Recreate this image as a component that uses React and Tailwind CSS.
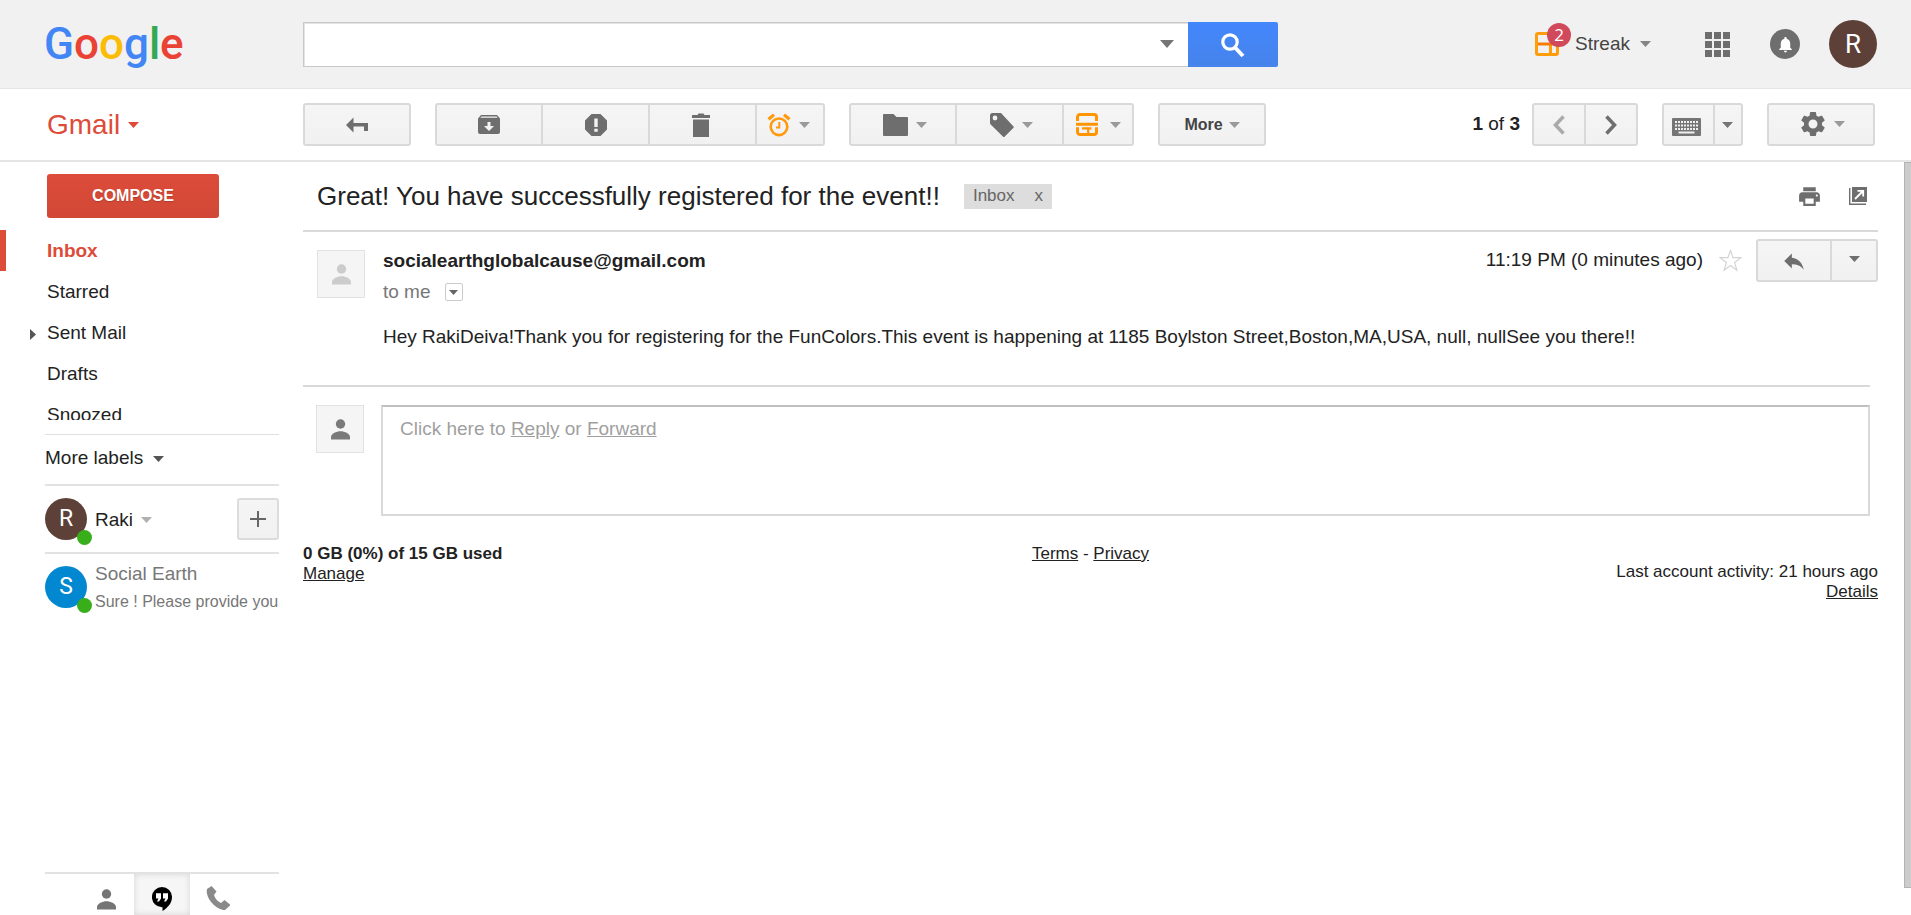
import React from 'react';
import { MdSettings, MdPrint, MdReply, MdNotifications } from 'react-icons/md';

const btn =
  'flex h-[43px] shrink-0 items-center justify-center border-2 border-[#d9d9d9] bg-linear-to-b from-[#f5f5f5] to-[#f1f1f1] text-[#6e6e6e]';

function Caret({ className = 'text-[#9a9a9a]' }) {
  return (
    <svg className={`shrink-0 ${className}`} width="11" height="6" viewBox="0 0 11 6" fill="currentColor" aria-hidden="true">
      <path d="M0 0h11L5.5 6z" />
    </svg>
  );
}

function SearchIcon() {
  return (
    <svg width="24" height="25" viewBox="0 0 24 25" fill="none" stroke="#fff" aria-hidden="true">
      <circle cx="9" cy="9" r="7.200" strokeWidth="3.200" />
      <path d="m14 14.500 8 8.500" strokeWidth="4" />
    </svg>
  );
}

function BackIcon() {
  return (
    <svg width="22" height="16" viewBox="0 0 22 16" fill="currentColor" aria-hidden="true">
      <path d="M0 8 7.500 0.500V6H22v8h-4V9.500H7.500v6z" />
    </svg>
  );
}

function ArchiveIcon() {
  return (
    <svg width="22" height="19" viewBox="0 0 22 19" fill="currentColor" aria-hidden="true">
      <path fillRule="evenodd" d="M3 0h16l3 3.500V17a2 2 0 0 1-2 2H2a2 2 0 0 1-2-2V3.500zM3.200 1.500 2.500 2.700h17l-.8-1.200zM9.500 7v4H6l5 5 5-5h-3.500V7z" />
    </svg>
  );
}

function ReportIcon() {
  return (
    <svg width="22" height="22" viewBox="0 0 22 22" fill="currentColor" aria-hidden="true">
      <path fillRule="evenodd" d="M6.500 0h9L22 6.500v9L15.500 22h-9L0 15.500v-9zM9.300 4.500v8.500h3.400V4.500zM9.300 14.700v3h3.400v-3z" />
    </svg>
  );
}

function TrashIcon() {
  return (
    <svg width="18" height="24" viewBox="0 0 18 24" fill="currentColor" aria-hidden="true">
      <path d="M0 2h5.500l1-1.500h5l1 1.500H18v3H0zM1 6.500h16V24H1z" />
    </svg>
  );
}

function AlarmIcon() {
  return (
    <svg width="24" height="24" viewBox="0 0 24 24" fill="none" stroke="#ff9a0f" aria-hidden="true">
      <circle cx="12" cy="13.800" r="8.300" strokeWidth="2.600" />
      <path d="M1.500 6.300 7 1.800M22.500 6.300 17 1.800" strokeWidth="3.200" />
      <path d="M12.300 9v5.500H9" strokeWidth="2" />
    </svg>
  );
}

function FolderIcon() {
  return (
    <svg width="25" height="22" viewBox="0 0 25 22" fill="currentColor" aria-hidden="true">
      <path d="M1 0h9.500l3 3H24a1 1 0 0 1 1 1v17a1 1 0 0 1-1 1H1a1 1 0 0 1-1-1V1a1 1 0 0 1 1-1z" />
    </svg>
  );
}

function TagIcon() {
  return (
    <svg width="24" height="24" viewBox="0 0 24 24" fill="currentColor" aria-hidden="true">
      <path fillRule="evenodd" d="M2.500 0H11l12.500 13.500a1 1 0 0 1 0 1.300L14.500 23.700a1 1 0 0 1-1.400 0L.7 11.500A2 2 0 0 1 0 10V2.500A2.500 2.500 0 0 1 2.500 0zM5 2.600a2.400 2.400 0 1 0 0 4.800 2.400 2.400 0 0 0 0-4.800z" />
    </svg>
  );
}

function BoxIcon() {
  return (
    <svg width="22" height="23" viewBox="0 0 22 23" fill="none" stroke="#ff9500" aria-hidden="true">
      <path d="M1.500 8V4a2.500 2.500 0 0 1 2.500-2.500h14A2.500 2.500 0 0 1 20.500 4v4M0 11.200h22M1.500 14.300V19A2.500 2.500 0 0 0 4 21.500h14a2.500 2.500 0 0 0 2.500-2.500v-4.700" strokeWidth="3" />
      <path d="M6 15.300h9.500M12.200 15v6" strokeWidth="2.200" />
    </svg>
  );
}

function KeyboardIcon() {
  return (
    <svg width="29" height="18" viewBox="0 0 29 18" aria-hidden="true">
      <rect width="29" height="18" rx="1" fill="#757575" />
      <path d="M3 4h23M3 7.500h23M3 11h23" stroke="#efefef" strokeWidth="2" strokeDasharray="2 1" />
      <path d="M6.500 14.500h16" stroke="#efefef" strokeWidth="2" />
    </svg>
  );
}

function StreakIcon() {
  return (
    <svg width="24" height="24" viewBox="0 0 24 24" fill="none" aria-hidden="true">
      <rect x="1.500" y="1.500" width="21" height="21" rx="1.500" stroke="#ff9d0a" strokeWidth="3" />
      <path d="M15.500 12v11" stroke="#ff9d0a" strokeWidth="3" />
      <path d="M3 12h18" stroke="#f57c00" strokeWidth="3" />
    </svg>
  );
}

function AppsIcon() {
  const at = [0, 9, 18];
  return (
    <svg width="25" height="25" viewBox="0 0 25 25" fill="#6e6e6e" aria-hidden="true">
      {at.map((y) => at.map((x) => <rect key={`${x}-${y}`} x={x} y={y} width="7" height="7" />))}
    </svg>
  );
}

function PopOutIcon() {
  return (
    <svg width="18" height="18" viewBox="0 0 18 18" aria-hidden="true">
      <rect x="3" width="15" height="15" fill="#6e6e6e" />
      <path d="M.7 1v16.300H17" fill="none" stroke="#6e6e6e" strokeWidth="1.400" />
      <path d="M6 12 14 4M8.500 3.800h5.700v5.700" fill="none" stroke="#fff" strokeWidth="1.800" />
    </svg>
  );
}

function PersonIcon() {
  return (
    <svg width="19" height="21" viewBox="0 0 19 21" fill="currentColor" aria-hidden="true">
      <circle cx="9.500" cy="5" r="4.700" />
      <path d="M0 20.500v-2.300C0 14.500 5.500 12.300 9.500 12.300s9.500 2.200 9.500 5.900v2.300z" />
    </svg>
  );
}

function HangoutsIcon() {
  return (
    <svg width="20" height="24" viewBox="0 0 20 24" aria-hidden="true">
      <path d="M10 0a10 10 0 0 1 10 10.200c0 5.600-4 10.300-9.500 13.800v-3.800H10A10.100 10.100 0 0 1 10 0z" fill="#000" />
      <path d="M4 6.200h5v5.300L7 14.500H5l1.500-3H4zM11 6.200h5v5.300l-2 3h-2l1.500-3H11z" fill="#fff" />
    </svg>
  );
}

function PhoneIcon() {
  return (
    <svg width="24" height="24" viewBox="0 0 24 24" fill="#8a8a8a" aria-hidden="true">
      <path d="M5.500 0 1 3C-1 12 10 24 19 24l5-4.500v-1L18.500 14 15 17c-3.500-1.500-6-4.500-7-8l2.500-3.500z" />
    </svg>
  );
}

function Portrait({ className }) {
  return (
    <div className={`flex size-12 shrink-0 items-center justify-center border border-[#e2e2e2] bg-[#f5f5f5] ${className}`}>
      <PersonIcon />
    </div>
  );
}

function Contact({ letter, color }) {
  return (
    <div className={`relative flex size-[42px] shrink-0 items-center justify-center rounded-full text-[23px] text-white ${color}`}>
      <span className="font-['Roboto',sans-serif]">{letter}</span>
      <span className="absolute top-8 left-8 size-[15px] rounded-full bg-[#38ae1b]" />
    </div>
  );
}

function Header() {
  return (
    <header className="flex h-[89px] items-center border-b border-[#e5e5e5] bg-[#f1f1f1]">
      <div className="w-[303px] shrink-0 pl-[44px]">
        <a href="#home" aria-label="Google" className="font-['Roboto',sans-serif] text-[44px] leading-[56px] font-medium">
          <span className="text-[#4285f4]">G</span>
          <span className="text-[#ea4335]">o</span>
          <span className="text-[#fbbc05]">o</span>
          <span className="text-[#4285f4]">g</span>
          <span className="text-[#34a853]">l</span>
          <span className="text-[#ea4335]">e</span>
        </a>
      </div>
      <form className="flex h-[45px] w-[975px]" role="search">
        <div className="flex min-w-0 flex-1 items-center border border-r-0 border-[#c8c8c8] bg-white shadow-[inset_1px_1px_0_#e4e4e4]">
          <input aria-label="Search mail" className="h-full min-w-0 flex-1 bg-transparent px-3 text-[19px] outline-none" />
          <button type="button" aria-label="Search options" className="flex h-full w-[42px] items-center justify-center">
            <svg width="14" height="8" viewBox="0 0 14 8" fill="#757575" aria-hidden="true">
              <path d="M0 0h14L7 8z" />
            </svg>
          </button>
        </div>
        <button type="button" aria-label="Search" className="flex w-[90px] items-center justify-center rounded-r-[2px] bg-linear-to-b from-[#4387fd] to-[#4683ea] pt-0.5">
          <SearchIcon />
        </button>
      </form>
      <div className="ml-auto flex items-center pr-[34px]">
        <button type="button" className="flex items-center">
          <span className="relative mr-4">
            <StreakIcon />
            <span className="absolute -top-[9px] left-3 flex size-6 items-center justify-center rounded-full bg-[#d14a5c] font-['Open_Sans',sans-serif] text-[17px] text-white">
              2
            </span>
          </span>
          <span className="mr-2.5 text-[19px] text-[#444]">Streak</span>
          <Caret className="text-[#858585]" />
        </button>
        <button type="button" aria-label="Apps" className="ml-[54px]">
          <AppsIcon />
        </button>
        <button type="button" aria-label="Notifications" className="ml-10 flex size-[30px] items-center justify-center rounded-full bg-[#6e6e6e] text-white">
          <MdNotifications size={19} />
        </button>
        <button type="button" aria-label="Account" className="ml-[29px] flex size-12 items-center justify-center rounded-full bg-[#5d4037] font-['Roboto',sans-serif] text-[26px] text-white">
          R
        </button>
      </div>
    </header>
  );
}

function Toolbar() {
  return (
    <div className="flex h-[73px] items-center border-b-2 border-[#e5e5e5]">
      <div className="w-[303px] shrink-0 pl-[47px]">
        <button type="button" className="flex items-center gap-2 text-[28px] leading-8 text-[#dd4b39]">
          Gmail
          <Caret className="text-[#dd4b39]" />
        </button>
      </div>
      <div className="flex gap-6">
        <button type="button" aria-label="Back to Inbox" className={`${btn} w-[108px] rounded-[3px]`}>
          <BackIcon />
        </button>
        <div className="flex">
          <button type="button" aria-label="Archive" className={`${btn} w-[108px] rounded-l-[3px]`}>
            <ArchiveIcon />
          </button>
          <button type="button" aria-label="Report spam" className={`${btn} -ml-0.5 w-[109px]`}>
            <ReportIcon />
          </button>
          <button type="button" aria-label="Delete" className={`${btn} -ml-0.5 w-[109px] pr-1`}>
            <TrashIcon />
          </button>
          <button type="button" aria-label="Snooze" className={`${btn} -ml-0.5 w-[70px] gap-2 rounded-r-[3px] pr-1`}>
            <AlarmIcon />
            <Caret />
          </button>
        </div>
        <div className="flex">
          <button type="button" aria-label="Move to" className={`${btn} w-[108px] gap-2 rounded-l-[3px] pl-1`}>
            <FolderIcon />
            <Caret />
          </button>
          <button type="button" aria-label="Labels" className={`${btn} -ml-0.5 w-[109px] gap-2 pl-1`}>
            <TagIcon />
            <Caret />
          </button>
          <button type="button" aria-label="Add to box" className={`${btn} -ml-0.5 w-[72px] gap-3 rounded-r-[3px]`}>
            <BoxIcon />
            <Caret />
          </button>
        </div>
        <button type="button" className={`${btn} w-[108px] gap-1.5 rounded-[3px] text-[16px] font-bold`}>
          <span className="text-[#444]">More</span>
          <Caret />
        </button>
      </div>
      <div className="ml-auto flex items-center gap-6 pr-9">
        <div className="flex items-center">
          <span className="mr-3 text-[19px] text-[#222]">
            <b>1</b> of <b>3</b>
          </span>
          <button type="button" aria-label="Newer" className={`${btn} w-[54px] rounded-l-[3px]`}>
            <svg width="12" height="20" viewBox="0 0 12 20" fill="none" stroke="#aaa" strokeWidth="3.500" aria-hidden="true">
              <path d="M10.500 1.500 2.500 10l8 8.500" />
            </svg>
          </button>
          <button type="button" aria-label="Older" className={`${btn} -ml-0.5 w-[54px] rounded-r-[3px]`}>
            <svg width="12" height="20" viewBox="0 0 12 20" fill="none" stroke="#6e6e6e" strokeWidth="3.500" aria-hidden="true">
              <path d="m1.500 1.500 8 8.500-8 8.500" />
            </svg>
          </button>
        </div>
        <div className="flex">
          <button type="button" aria-label="Input tools" className={`${btn} w-[53px] rounded-l-[3px] pt-1 pr-1`}>
            <KeyboardIcon />
          </button>
          <button type="button" aria-label="Select input tool" className={`${btn} -ml-0.5 w-[30px] rounded-r-[3px] pr-0.5`}>
            <Caret className="text-[#757575]" />
          </button>
        </div>
        <button type="button" aria-label="Settings" className={`${btn} w-[108px] gap-1.5 rounded-[3px] pb-0.5`}>
          <MdSettings size={30} />
          <Caret />
        </button>
      </div>
    </div>
  );
}

function Sidebar() {
  const labels = ['Starred', 'Sent Mail', 'Drafts', 'Snoozed'];
  return (
    <aside className="flex w-[279px] shrink-0 flex-col pt-3">
      <button type="button" className="ml-[47px] h-11 w-[172px] rounded-[3px] bg-linear-to-b from-[#dd4b39] to-[#d14836] text-[16px] font-bold text-white [text-shadow:0_1px_1px_rgba(0,0,0,0.2)]">
        COMPOSE
      </button>
      <nav className="mt-3 h-[190px] overflow-hidden text-[19px] text-[#222]">
        <a href="#inbox" className="flex h-[41px] items-center border-l-[6px] border-[#dd4b39] pt-0.5 pl-[41px] font-bold text-[#dd4b39]">
          Inbox
        </a>
        {labels.map((label) => (
          <a key={label} href={`#${label}`} className="flex h-[41px] items-center pt-0.5">
            <span className="flex w-[47px] justify-end pt-0.5 pr-[11px]">
              {label === 'Sent Mail' && (
                <svg width="6" height="11" viewBox="0 0 6 11" fill="#555" aria-hidden="true">
                  <path d="M0 0v11l6-5.500z" />
                </svg>
              )}
            </span>
            {label}
          </a>
        ))}
      </nav>
      <div className="mt-3.5 ml-[45px] flex min-h-0 flex-1 flex-col border-t border-[#e0e0e0]">
        <button type="button" className="flex h-[49px] items-center gap-2.5 pb-0.5 text-[19px] text-[#222]">
          More labels
          <Caret className="text-[#555]" />
        </button>
        <div className="flex h-[70px] items-start border-y-2 border-[#e2e2e2] pt-3">
          <Contact letter="R" color="bg-[#5d4037]" />
          <button type="button" className="ml-2 flex h-[42px] items-center gap-2 pt-0.5 text-[19px] text-[#222]">
            Raki
            <Caret className="text-[#b0b0b0]" />
          </button>
          <button type="button" aria-label="New conversation" className="ml-auto flex size-[42px] items-center justify-center rounded-[3px] border-2 border-[#dcdcdc] bg-linear-to-b from-[#f5f5f5] to-[#f1f1f1]">
            <svg width="16" height="16" viewBox="0 0 16 16" stroke="#666" strokeWidth="2" aria-hidden="true">
              <path d="M8 0v16M0 8h16" />
            </svg>
          </button>
        </div>
        <a href="#chat" className="flex items-start pt-3">
          <Contact letter="S" color="bg-[#0288d1]" />
          <div className="-mt-1.5 ml-2 min-w-0 flex-1 overflow-hidden whitespace-nowrap text-[#777]">
            <div className="text-[19px] leading-7">Social Earth</div>
            <div className="text-[16px] leading-7">Sure ! Please provide you</div>
          </div>
        </a>
        <div className="mt-auto flex h-[43px] border-t-2 border-[#e2e2e2] pl-[34px]">
          <button type="button" aria-label="Contacts" className="flex w-[55px] items-start justify-center pt-[15px] text-[#757575]">
            <PersonIcon />
          </button>
          <button type="button" aria-label="Hangouts" className="flex w-14 items-start justify-center bg-[#f6f6f6] pt-[13px] shadow-[inset_0_0_6px_#d4d4d4]">
            <HangoutsIcon />
          </button>
          <button type="button" aria-label="Phone" className="flex w-[55px] items-start justify-center pt-3">
            <PhoneIcon />
          </button>
        </div>
      </div>
    </aside>
  );
}

function Message() {
  return (
    <main className="ml-6 min-w-0 flex-1 pr-[26px] text-[19px] text-[#222]">
      <div className="flex h-[70px] items-center border-b-2 border-[#d9d9d9] pr-[11px] pl-3.5">
        <h1 className="text-[26px] leading-8">Great! You have successfully registered for the event!!</h1>
        <span className="ml-6 flex h-[25px] items-center gap-5 bg-[#ddd] px-[9px] text-[17px] text-[#666]">
          Inbox
          <button type="button" aria-label="Remove label">x</button>
        </span>
        <button type="button" aria-label="Print" className="ml-auto text-[#6e6e6e]">
          <MdPrint size={25} />
        </button>
        <button type="button" aria-label="Open in new window" className="ml-[27px]">
          <PopOutIcon />
        </button>
      </div>

      <article className="flex pl-3.5">
        <Portrait className="mt-[18px] text-[#ccc]" />
        <div className="ml-[18px] min-w-0 flex-1">
          <div className="flex items-start">
            <div className="pt-[17px]">
              <div className="leading-6 font-bold">socialearthglobalcause@gmail.com</div>
              <div className="mt-[7px] flex items-center gap-3.5 leading-6 text-[#777]">
                to me
                <button type="button" aria-label="Show details" className="flex size-[18px] items-center justify-center rounded-[2px] border border-[#ccc]">
                  <svg width="9" height="5" viewBox="0 0 9 5" fill="#666" aria-hidden="true">
                    <path d="M0 0h9L4.500 5z" />
                  </svg>
                </button>
              </div>
            </div>
            <div className="ml-auto flex items-center pt-[7px]">
              <time>11:19 PM (0 minutes ago)</time>
              <button type="button" aria-label="Star" className="mr-3.5 ml-4">
                <svg width="23" height="23" viewBox="0 0 23 23" fill="#fff" stroke="#d4d4d4" strokeWidth="1.200" aria-hidden="true">
                  <path d="m11.500 1.500 2.600 7.200h7.700l-6.200 4.700 2.300 7.800-6.400-4.600-6.400 4.600 2.300-7.800L1.200 8.700h7.700z" />
                </svg>
              </button>
              <button type="button" aria-label="Reply" className={`${btn} w-[76px] rounded-l-[3px]`}>
                <MdReply size={26} />
              </button>
              <button type="button" aria-label="More actions" className={`${btn} -ml-0.5 w-12 rounded-r-[3px] pb-1`}>
                <Caret className="text-[#6e6e6e]" />
              </button>
            </div>
          </div>
          <p className="mt-[21px] mb-9 leading-6">
            Hey RakiDeiva!Thank you for registering for the FunColors.This event is happening at 1185 Boylston Street,Boston,MA,USA, null, nullSee you there!!
          </p>
        </div>
      </article>

      <section className="mr-2 flex border-t-2 border-[#d9d9d9] pt-[18px] pl-[13px]">
        <Portrait className="text-[#7a7a7a]" />
        <div className="ml-[17px] h-[111px] flex-1 border-2 border-[#d9d9d9] border-t-[#c0c0c0] px-[17px] py-2.5 leading-6 text-[#9f9f9f]">
          Click here to <a href="#reply" className="underline">Reply</a> or <a href="#forward" className="underline">Forward</a>
        </div>
      </section>

      <footer className="mt-7 grid grid-cols-3 text-[17px] leading-5">
        <div>
          <div className="font-bold">0 GB (0%) of 15 GB used</div>
          <a href="#manage" className="underline">Manage</a>
        </div>
        <div className="text-center">
          <a href="#terms" className="underline">Terms</a> - <a href="#privacy" className="underline">Privacy</a>
        </div>
        <div className="pt-[18px] text-right">
          <div>Last account activity: 21 hours ago</div>
          <a href="#details" className="underline">Details</a>
        </div>
      </footer>
    </main>
  );
}

export default function App() {
  return (
    <div className="flex h-screen flex-col overflow-hidden bg-white font-['Liberation_Sans',Arial,sans-serif]">
      <Header />
      <Toolbar />
      <div className="flex min-h-0 flex-1">
        <Sidebar />
        <Message />
        <div className="mb-[27px] w-[7px] shrink-0 border border-r-0 border-[#b3b3b3] bg-[#ccc]" />
      </div>
    </div>
  );
}
